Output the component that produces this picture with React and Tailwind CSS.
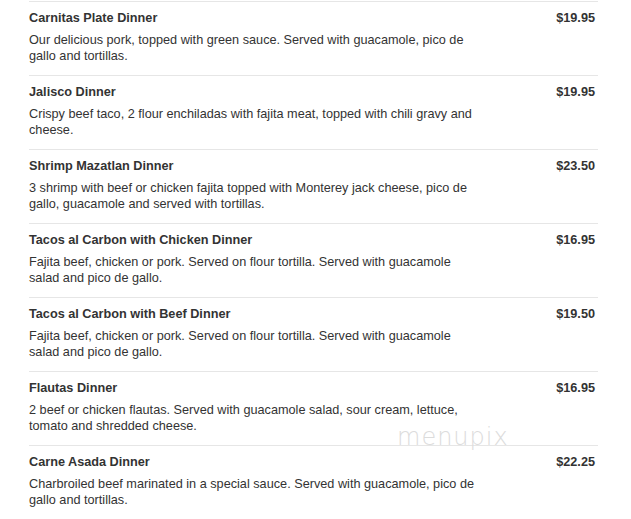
import React from 'react';

const items = [
  { name: 'Carnitas Plate Dinner', price: '$19.95', desc: 'Our delicious pork, topped with green sauce. Served with guacamole, pico de gallo and tortillas.' },
  { name: 'Jalisco Dinner', price: '$19.95', desc: 'Crispy beef taco, 2 flour enchiladas with fajita meat, topped with chili gravy and cheese.' },
  { name: 'Shrimp Mazatlan Dinner', price: '$23.50', desc: '3 shrimp with beef or chicken fajita topped with Monterey jack cheese, pico de gallo, guacamole and served with tortillas.' },
  { name: 'Tacos al Carbon with Chicken Dinner', price: '$16.95', desc: 'Fajita beef, chicken or pork. Served on flour tortilla. Served with guacamole salad and pico de gallo.' },
  { name: 'Tacos al Carbon with Beef Dinner', price: '$19.50', desc: 'Fajita beef, chicken or pork. Served on flour tortilla. Served with guacamole salad and pico de gallo.' },
  { name: 'Flautas Dinner', price: '$16.95', desc: '2 beef or chicken flautas. Served with guacamole salad, sour cream, lettuce, tomato and shredded cheese.' },
  { name: 'Carne Asada Dinner', price: '$22.25', desc: 'Charbroiled beef marinated in a special sauce. Served with guacamole, pico de gallo and tortillas.' },
];

function MenuItem({ item }) {
  return (
    <div className="h-[74px] border-t border-[#e6e6e6] pt-[7px]">
      <div className="flex justify-between text-[12.7px] leading-[18px] font-bold text-[#333]">
        <span>{item.name}</span>
        <span className="pr-[3px]">{item.price}</span>
      </div>
      <p className="mt-[5px] w-[452px] text-[12.7px] leading-[16px] text-[#333]">{item.desc}</p>
    </div>
  );
}

export default function App() {
  return (
    <div className="relative w-[631px] h-[519px] bg-white overflow-hidden pt-px" style={{ fontFamily: '"Liberation Sans", Arial, sans-serif' }}>
      <div className="ml-[29px] w-[569px]">
        {items.map((item) => <MenuItem key={item.name} item={item} />)}
        <div className="border-t border-[#e6e6e6]" />
      </div>
      <div className="absolute left-[397px] top-[425px] text-[24px] tracking-[1px] text-[#dcdcdc] leading-none" style={{ fontFamily: '"DejaVu Sans", sans-serif', fontWeight: 200 }}>
        menupix
      </div>
    </div>
  );
}
